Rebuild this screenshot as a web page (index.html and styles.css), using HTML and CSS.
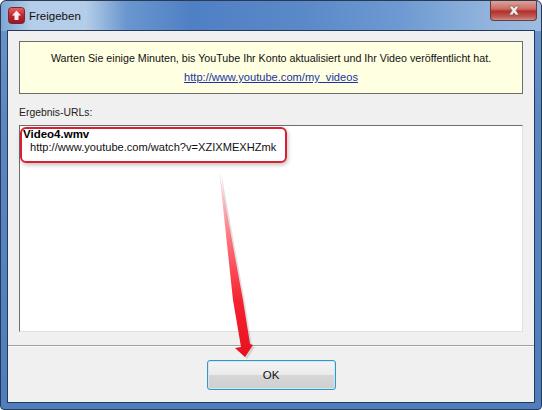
FILE: index.html
```html
<!DOCTYPE html>
<html lang="de">
<head>
<meta charset="utf-8">
<title>Freigeben</title>
<link rel="stylesheet" href="styles.css">
</head>
<body>
<div class="window">
  <header class="titlebar">
    <svg class="appicon" width="17" height="17" viewBox="0 0 17 17">
      <defs><linearGradient id="ic" x1="0" y1="0" x2="0" y2="1"><stop offset="0" stop-color="#e8636a"/><stop offset=".5" stop-color="#c2262e"/><stop offset="1" stop-color="#8e1a20"/></linearGradient></defs>
      <rect x=".5" y=".5" width="16" height="16" rx="3" fill="url(#ic)" stroke="#7d2428"/>
      <path d="M8.5 3.5 L13 8.5 H10.5 V13 H6.5 V8.5 H4 Z" fill="#fbeeee"/>
    </svg>
    <span class="title">Freigeben</span>
    <div class="close">
      <svg width="18" height="13" viewBox="0 0 18 13"><path d="M4 2 H7.5 L9 4.2 L10.5 2 H14 L11 6.5 L14 11 H10.5 L9 8.8 L7.5 11 H4 L7 6.5 Z" fill="#f5ecec" stroke="#7a5a55" stroke-width=".7"/></svg>
    </div>
  </header>
  <main class="client">
    <div class="content">
      <section class="notice">
        <p>Warten Sie einige Minuten, bis YouTube Ihr Konto aktualisiert und Ihr Video veröffentlicht hat.</p>
        <a href="#">http://www.youtube.com/my_videos</a>
      </section>
      <label class="label">Ergebnis-URLs:</label>
      <div class="results">
        <div class="file">Video4.wmv</div>
        <div class="url">http://www.youtube.com/watch?v=XZIXMEXHZmk</div>
      </div>
    </div>
    <footer class="footer">
      <button class="ok">OK</button>
    </footer>
  </main>
  <div class="callout"></div>
  <svg class="arrow" width="60" height="195" viewBox="0 0 60 195">
    <defs>
      <linearGradient id="ar" x1="0" y1="0" x2="0" y2="1">
        <stop offset="0" stop-color="#ff9aa2" stop-opacity=".2"/>
        <stop offset=".35" stop-color="#ff7880"/>
        <stop offset=".7" stop-color="#f42430"/>
        <stop offset="1" stop-color="#e8101c"/>
      </linearGradient>
    </defs>
    <path class="arrow-shadow" d="M11 2 L25 132 L33 179 L27 180 L37 189 L45 177 L42 176 L35 132 Z"/>
    <path d="M11 2 L25 132 L33 179 L27 180 L37 189 L45 177 L42 176 L35 132 Z" fill="url(#ar)"/>
  </svg>
</div>
</body>
</html>
```
FILE: styles.css
```css
* { box-sizing: border-box; }
html, body { margin: 0; padding: 0; }
body { width: 542px; height: 410px; overflow: hidden; background: #fff; font-family: "Liberation Sans", Arial, sans-serif; }
.window {
  position: relative;
  width: 542px;
  height: 410px;
  display: flex;
  flex-direction: column;
  border: 1px solid #2b3a50;
  border-radius: 6px 6px 4px 4px;
  background:
    linear-gradient(90deg, #7ea6d6 0, #b4cde8 30px, #b4cde8 85px, #6a97cf 125px, #4f80c4 190px, #5a89c8 300px, #6d9ad2 400px, #8fb2dc 480px, #9dbce0 100%) top / 100% 30px no-repeat,
    linear-gradient(180deg, #6d96cb 0, #5a87c2 120px, #4f7dbd 100%);
  padding: 0 6px 6px;
}
.titlebar { height: 29px; display: flex; align-items: center; flex: none; position: relative; }
.appicon { margin: 0 0 0 1px; }
.title { margin-left: 4px; font: 11.5px "Liberation Sans", Arial, sans-serif; color: #111; }
.close {
  position: absolute;
  right: -2px;
  top: 0;
  width: 47px;
  height: 20px;
  display: flex;
  align-items: center;
  justify-content: center;
  border: 1px solid #6b3b3b;
  border-top: none;
  border-radius: 0 0 4px 4px;
  background: linear-gradient(180deg, #dba39a 0, #cf6f66 40%, #b5302c 55%, #c0605a 85%, #d08f88 100%);
}
.client {
  flex: 1;
  display: flex;
  flex-direction: column;
  background: #f0f0f0;
  border: 1px solid #243a5c;
}
.content { flex: 1; padding: 10px 11px 0 11px; display: flex; flex-direction: column; }
.notice {
  height: 53px;
  flex: none;
  background: #ffffe1;
  border: 1px solid #6d6d6d;
  text-align: center;
  font-size: 10.7px;
  color: #111;
  padding-top: 9px;
}
.notice p { margin: 0 0 5px; line-height: 14px; }
.notice a { font-size: 11.1px; color: #1a33a8; text-decoration: underline; line-height: 14px; display: block; }
.label { font-size: 10.4px; color: #222; margin-top: 12px; line-height: 14px; height: 19px; }
.results {
  height: 207px;
  background: #fff;
  border: 1px solid;
  border-color: #6e6e6e #e0e0e0 #e0e0e0 #6e6e6e;
  padding: 2px 0 0 3px;
  font-size: 11.1px;
  color: #111;
  line-height: 13px;
}
.file { font-size: 11.5px; font-weight: bold; color: #000; }
.url { padding-left: 7px; }
.footer {
  height: 57px;
  flex: none;
  margin-top: 13px;
  border-top: 1px solid #a0a0a0;
  box-shadow: inset 0 1px 0 #fafafa;
  display: flex;
  justify-content: center;
  padding-top: 14px;
}
.ok {
  width: 129px;
  height: 30px;
  border: 1px solid #3a94bb;
  border-radius: 3px;
  background: linear-gradient(180deg, #f4f4f4 0, #ebebeb 48%, #d6d6d6 52%, #cfcfcf 100%);
  box-shadow: inset 0 0 0 1px #c8eaf8;
  font: 11.5px "Liberation Sans", Arial, sans-serif;
  color: #111;
  padding: 0;
}
.callout {
  position: absolute;
  left: 19px;
  top: 126px;
  width: 267px;
  height: 36px;
  border: 2px solid #dc1f30;
  border-radius: 6px;
  box-shadow: 1px 2px 4px rgba(0,0,0,.25);
}
.arrow { position: absolute; left: 207px; top: 167px; }
.arrow-shadow { fill: #000; opacity: .12; transform: translate(2px, 2px); }
```
